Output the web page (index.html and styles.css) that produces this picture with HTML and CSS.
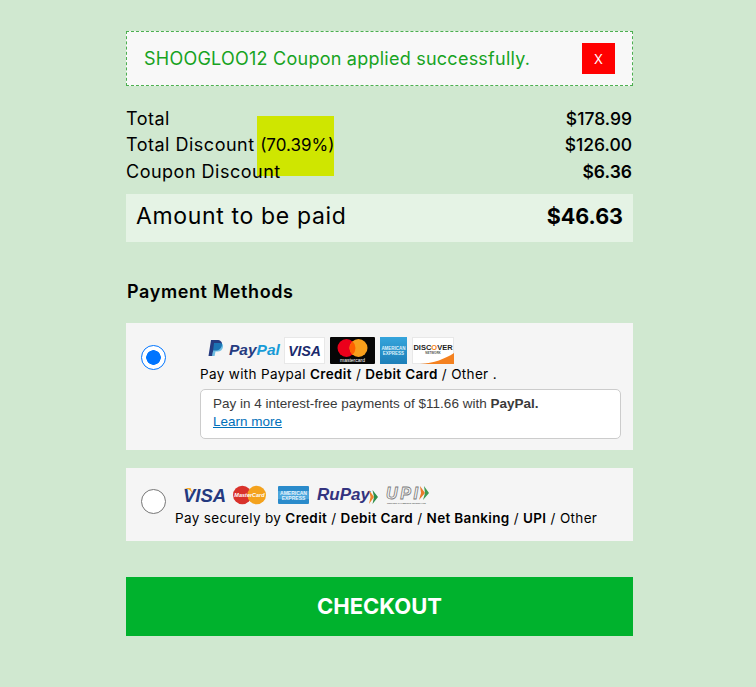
FILE: index.html
```html
<!DOCTYPE html>
<html lang="en">
<head>
<meta charset="utf-8">
<title>Checkout</title>
<link rel="stylesheet" href="styles.css">
</head>
<body>
<main class="panel">
  <div class="alert">
    <span class="alert-text">SHOOGLOO12 Coupon applied successfully.</span>
    <button class="close" type="button">X</button>
  </div>

  <div class="summary">
    <div class="row"><span>Total</span><span class="val">$178.99</span></div>
    <div class="row"><span>Total Discount <span class="pct"><i class="mark"></i><span class="pct-text">(70.39%)</span></span></span><span class="val">$126.00</span></div>
    <div class="row"><span class="over">Coupon Discount</span><b class="val">$6.36</b></div>
  </div>

  <div class="amount"><span>Amount to be paid</span><b>$46.63</b></div>

  <h2 class="methods">Payment Methods</h2>

  <section class="card card-paypal">
    <span class="radio radio-on"></span>
    <div class="card-body">
      <div class="logos logos-paypal">
        <svg class="logo logo-pp" width="84" height="27" viewBox="0 0 84 27">
          <path d="M11 3h6c3.500 0 5.500 2 5 5-.6 3.500-3 5.500-6.500 5.500h-2.300l-1 5.500H8.500z" fill="#253b80"/>
          <path d="M14 6h5.500c2.800 0 4 1.500 3.500 4-.6 3-2.700 4.500-5.500 4.500h-2l-.9 4.500h-2.600l1.200-6z" fill="#179bd7" opacity=".6"/>
          <text x="29" y="18" class="pp"><tspan class="pp-a">Pay</tspan><tspan class="pp-b">Pal</tspan></text>
        </svg>
        <svg class="logo" width="41" height="27" viewBox="0 0 41 27">
          <rect x=".5" y=".5" width="40" height="26" fill="#fff" stroke="#e8e8e8"/>
          <text x="20.500" y="18.500" class="visa-small">VISA</text>
        </svg>
        <svg class="logo" width="45" height="27" viewBox="0 0 45 27">
          <rect width="45" height="27" rx="1" fill="#060606"/>
          <circle cx="16.500" cy="11" r="9" fill="#eb001b"/>
          <circle cx="28.500" cy="11" r="9" fill="#f79e1b"/>
          <path d="M22.500 4.300a9 9 0 0 1 0 13.400a9 9 0 0 1 0-13.400z" fill="#ff5f00"/>
          <text x="22.500" y="25" class="mc-small">mastercard</text>
        </svg>
        <svg class="logo" width="27" height="27" viewBox="0 0 27 27">
          <defs><linearGradient id="ax" x1="0" y1="0" x2="0" y2="1"><stop offset="0" stop-color="#35a5dc"/><stop offset="1" stop-color="#1e7fb8"/></linearGradient></defs>
          <rect width="27" height="27" fill="url(#ax)"/>
          <text x="13.500" y="12.500" class="amex-small">AMERICAN</text>
          <text x="13.500" y="18" class="amex-small">EXPRESS</text>
        </svg>
        <svg class="logo" width="42" height="27" viewBox="0 0 42 27">
          <rect x=".5" y=".5" width="41" height="26" fill="#fff" stroke="#e8e8e8"/>
          <path d="M42 16v11H8c14-1 25-5 34-11z" fill="#f48120"/>
          <text x="21" y="13" class="disc-small">DISC<tspan class="disc-o">O</tspan>VER</text>
          <text x="21" y="17" class="disc-tiny">NETWORK</text>
        </svg>
      </div>
      <p class="line">Pay with Paypal <b>Credit</b> / <b>Debit Card</b> / Other .</p>
      <div class="later">
        <div>Pay in 4 interest-free payments of $11.66 with <b>PayPal.</b></div>
        <a href="#">Learn more</a>
      </div>
    </div>
  </section>

  <section class="card card-other">
    <span class="radio"></span>
    <div class="card-body">
      <div class="logos logos-other">
        <svg class="logo" width="46" height="24" viewBox="0 -2 46 24">
          <text x="3" y="17" class="visa-big">VISA</text>
          <path d="M0 3c5-.5 10 .5 13 6l-2.500-6z" fill="#f7a823"/>
        </svg>
        <svg class="logo" width="38" height="24" viewBox="0 -2 38 24">
          <circle cx="9.300" cy="10" r="9.300" fill="#d9322b"/>
          <circle cx="23.700" cy="10" r="9.300" fill="#f4a21d"/>
          <text x="16.500" y="12" class="mc-big">MasterCard</text>
        </svg>
        <svg class="logo" width="31" height="24" viewBox="0 -2 31 24">
          <rect y="1" width="31" height="18" rx="1" fill="#2a8bcb"/>
          <rect y="6" width="31" height="8" fill="#4ba6dc"/>
          <text x="15.500" y="9.500" class="amex-big">AMERICAN</text>
          <text x="15.500" y="15" class="amex-big">EXPRESS</text>
        </svg>
        <svg class="logo" width="63" height="24" viewBox="-1 -2 63 24">
          <text x="0" y="15" class="rupay">RuPay</text>
          <path d="M52 5l5 7-5 7 1.500-7z" fill="#f0822a"/>
          <path d="M55.500 5l5.500 7-5.500 7 1.500-7z" fill="#2f8f4a"/>
        </svg>
        <svg class="logo" width="45" height="24" viewBox="0 -2 45 24">
          <text x="0" y="13.500" class="upi" textLength="32">UPI</text>
          <path d="M34 1l5 7-6 7 2-7z" fill="#ea7a2a"/>
          <path d="M38 1l5 7-6 7 2-7z" fill="#3f9a50"/>
          <text x="1" y="19.300" class="upi-tiny">UNIFIED PAYMENTS INTERFACE</text>
        </svg>
      </div>
      <p class="line">Pay securely by <b>Credit</b> / <b>Debit Card</b> / <b>Net Banking</b> / <b>UPI</b> / Other</p>
    </div>
  </section>

  <button class="checkout" type="button">CHECKOUT</button>
</main>
</body>
</html>
```

FILE: styles.css
```css
* { box-sizing: border-box; }
html, body { margin: 0; padding: 0; }
body {
  min-height: 687px;
  background: #d0e8d0;
  color: #000;
  font-family: "Inter", "Liberation Sans", sans-serif;
}
.panel {
  width: 507px;
  margin-left: 126px;
  padding-top: 31px;
}
.alert {
  height: 55px;
  display: flex;
  align-items: center;
  justify-content: space-between;
  padding: 0 17px 0 17px;
  background: #f8f8f8;
  border: 1px dashed #4caf50;
  color: #17a31f;
  font-size: 18px;
  letter-spacing: .24px;
}
.close {
  width: 33px;
  height: 31px;
  padding: 0;
  border: 0;
  background: #ff0000;
  color: #fff;
  font: 13px "Inter", sans-serif;
}
.summary { margin-top: 19px; padding-right: 1px; }
.row {
  height: 26.500px;
  display: flex;
  justify-content: space-between;
  align-items: center;
  font-size: 18px;
  letter-spacing: .5px;
}
.val { font-weight: 500; font-size: 17.500px; letter-spacing: 0; }
b.val { font-weight: 600; }
.pct { position: relative; display: inline-block; letter-spacing: 0; font-size: 17px; }
.mark {
  position: absolute;
  left: -3.500px;
  top: -19px;
  width: 77px;
  height: 60px;
  background: #cfe600;
}
.pct-text, .over { position: relative; }
.amount {
  height: 48px;
  margin-top: 9.500px;
  padding: 0 10px 4px;
  display: flex;
  justify-content: space-between;
  align-items: center;
  background: #e5f3e5;
  font-size: 23px;
  letter-spacing: .65px;
}
.amount b { font-weight: 700; font-size: 21.500px; letter-spacing: 0; }
.methods {
  margin: 38px 0 0;
  padding-left: 1px;
  height: 24px;
  line-height: 24px;
  font-size: 18px;
  font-weight: 600;
  letter-spacing: .6px;
}
.card {
  display: flex;
  background: #f5f5f5;
}
.card-paypal {
  margin-top: 19px;
  height: 127px;
  padding: 14px 12px 0 15px;
}
.card-other {
  margin-top: 18px;
  height: 73px;
  padding: 15px 12px 0 15px;
}
.radio {
  flex: none;
  width: 25px;
  height: 25px;
  border: 1px solid #767676;
  border-radius: 50%;
  background: #fff;
}
.card-paypal .radio { margin-top: 8px; }
.card-other .radio { margin-top: 6px; }
.radio-on {
  border: 1.500px solid #0075ff;
  background: radial-gradient(circle, #0075ff 0 7px, #fff 7.500px);
}
.card-paypal .card-body { margin-left: 34px; flex: 1; }
.card-other .card-body { margin-left: 9px; flex: 1; }
.logos { display: flex; align-items: center; }
.logos-paypal { gap: 5px; height: 27px; }
.logo-pp { margin-right: -5px; }
.logos-other { gap: 7px; height: 24px; margin-left: 5px; }
.logo { display: block; flex: none; }
.line {
  margin: 0;
  font-size: 13.500px;
  line-height: 20px;
  letter-spacing: .34px;
}
.logos-other + .line { margin-top: 1px; }
.line b { font-weight: 600; }
.later {
  margin-top: 5px;
  height: 50px;
  padding: 5px 12px;
  background: #fff;
  border: 1px solid #cccccc;
  border-radius: 5px;
  color: #3a3a3a;
  font: 13.500px/18px "Liberation Sans", sans-serif;
}
.later a { color: #0070ba; }
.checkout {
  display: block;
  width: 100%;
  height: 59px;
  margin-top: 36px;
  padding: 0 0 2px;
  border: 0;
  background: #00b22d;
  color: #fff;
  font: 700 22px "Inter", sans-serif;
}
svg text { font-family: "Liberation Sans", sans-serif; font-weight: 700; }
.pp { font-size: 15.500px; font-style: italic; }
.pp-a { fill: #253b80; }
.pp-b { fill: #179bd7; }
.visa-small { font-size: 14px; font-style: italic; fill: #1a2a6c; text-anchor: middle; }
.mc-small { font-size: 5px; fill: #fff; text-anchor: middle; font-weight: 400; }
.amex-small { font-size: 4.500px; fill: #dff1fb; text-anchor: middle; }
.disc-small { font-size: 7.500px; fill: #222; text-anchor: middle; }
.disc-o { fill: #f48120; }
.disc-tiny { font-size: 3px; fill: #555; text-anchor: middle; }
.visa-big { font-size: 18.500px; font-style: italic; fill: #24397f; }
.mc-big { font-size: 5.500px; font-style: italic; fill: #fff; text-anchor: middle; }
.amex-big { font-size: 5px; fill: #e6f4fc; text-anchor: middle; }
.rupay { font-size: 17px; font-style: italic; fill: #33337f; }
.upi { font-size: 16px; font-style: italic; fill: #f5f5f5; stroke: #7c7c7c; stroke-width: .8px; }
.upi-tiny { font-size: 2.500px; fill: #666; }
```
